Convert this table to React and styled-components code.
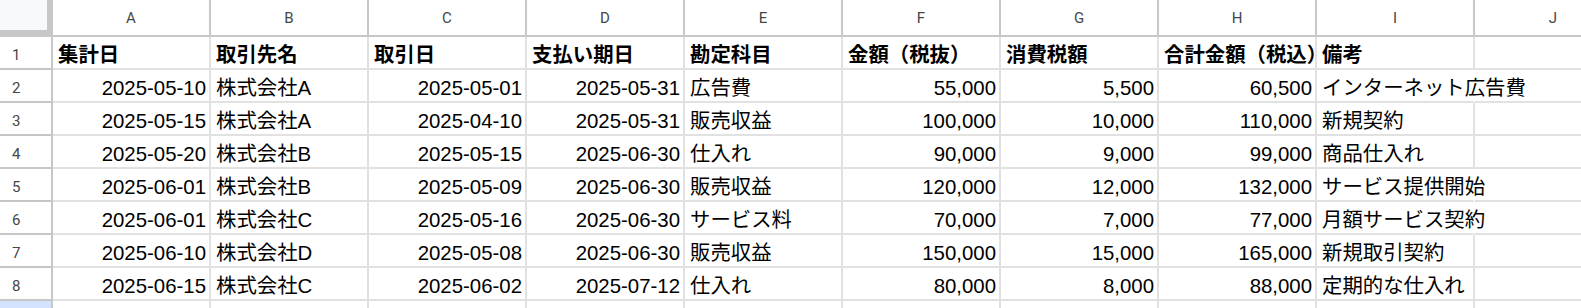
import React from "react";
import styled, { createGlobalStyle, css } from "styled-components";

const GlobalStyle = createGlobalStyle`
  html, body {
    margin: 0;
    padding: 0;
    background: #ffffff;
    overflow: hidden;
  }
`;

const HEADER_LINE = "#c7c7c7";
const GRID_LINE = "#e1e1e1";
const FONT = `"Liberation Sans", Arial, "Noto Sans CJK JP", sans-serif`;

const Sheet = styled.div`
  display: grid;
  grid-template-columns: 53px repeat(10, 158px);
  grid-template-rows: 37px repeat(9, 33px);
  width: 1581px;
  height: 308px;
  overflow: hidden;
  font-family: ${FONT};
`;

const Corner = styled.div`
  box-sizing: border-box;
  background: #f8f9fa;
  border-right: 6px solid ${HEADER_LINE};
  border-bottom: 7px solid ${HEADER_LINE};
`;

const ColHeader = styled.div`
  box-sizing: border-box;
  display: flex;
  align-items: center;
  justify-content: center;
  padding-top: 2px;
  border-right: 2px solid ${HEADER_LINE};
  border-bottom: 2px solid ${HEADER_LINE};
  font-family: Roboto, "Liberation Sans", sans-serif;
  font-size: 15px;
  line-height: 17px;
  color: #444746;
`;

const RowHeader = styled.div`
  box-sizing: border-box;
  display: flex;
  align-items: center;
  padding: 5px 0 0 12px;
  border-right: 2px solid ${HEADER_LINE};
  border-bottom: 2px solid ${HEADER_LINE};
  background: ${(p) => (p.$active ? "#d3e3fd" : "#ffffff")};
  font-family: Roboto, "Liberation Sans", sans-serif;
  font-size: 15px;
  line-height: 17px;
  color: #444746;
`;

const Cell = styled.div`
  box-sizing: border-box;
  display: flex;
  align-items: flex-end;
  justify-content: ${(p) => (p.$align === "right" ? "flex-end" : "flex-start")};
  padding: 0 3px 1px 5px;
  border-right: 2px solid ${GRID_LINE};
  border-bottom: 2px solid ${GRID_LINE};
  font-size: 20.4px;
  line-height: 23px;
  color: #000000;
  white-space: nowrap;
  overflow: hidden;
  font-weight: ${(p) => (p.$bold ? 700 : 400)};
  ${(p) =>
    p.$spill &&
    css`
      overflow: visible;
      border-right-color: transparent;
      position: relative;
      z-index: 1;
    `}
`;

const COLS = ["A", "B", "C", "D", "E", "F", "G", "H", "I", "J"];

const HEAD = ["集計日", "取引先名", "取引日", "支払い期日", "勘定科目", "金額（税抜）", "消費税額", "合計金額（税込）", "備考"];

const ROWS = [
  ["2025-05-10", "株式会社A", "2025-05-01", "2025-05-31", "広告費", "55,000", "5,500", "60,500", "インターネット広告費"],
  ["2025-05-15", "株式会社A", "2025-04-10", "2025-05-31", "販売収益", "100,000", "10,000", "110,000", "新規契約"],
  ["2025-05-20", "株式会社B", "2025-05-15", "2025-06-30", "仕入れ", "90,000", "9,000", "99,000", "商品仕入れ"],
  ["2025-06-01", "株式会社B", "2025-05-09", "2025-06-30", "販売収益", "120,000", "12,000", "132,000", "サービス提供開始"],
  ["2025-06-01", "株式会社C", "2025-05-16", "2025-06-30", "サービス料", "70,000", "7,000", "77,000", "月額サービス契約"],
  ["2025-06-10", "株式会社D", "2025-05-08", "2025-06-30", "販売収益", "150,000", "15,000", "165,000", "新規取引契約"],
  ["2025-06-15", "株式会社C", "2025-06-02", "2025-07-12", "仕入れ", "80,000", "8,000", "88,000", "定期的な仕入れ"],
];

const RIGHT_COLS = new Set([0, 2, 3, 5, 6, 7]);

export default function App() {
  return (
    <>
      <GlobalStyle />
      <Sheet>
        <Corner />
        {COLS.map((c) => (
          <ColHeader key={c}>{c}</ColHeader>
        ))}

        <RowHeader>1</RowHeader>
        {HEAD.map((h, i) => (
          <Cell key={i} $bold>
            {h}
          </Cell>
        ))}
        <Cell />

        {ROWS.map((row, r) => (
          <React.Fragment key={r}>
            <RowHeader>{r + 2}</RowHeader>
            {row.map((v, i) => {
              const spill = i === 8 && v.length * 20 > 150;
              return (
                <Cell key={i} $align={RIGHT_COLS.has(i) ? "right" : "left"} $spill={spill}>
                  {v}
                </Cell>
              );
            })}
            <Cell />
          </React.Fragment>
        ))}

        <RowHeader $active />
        {COLS.map((c) => (
          <Cell key={"r9" + c} />
        ))}
      </Sheet>
    </>
  );
}
